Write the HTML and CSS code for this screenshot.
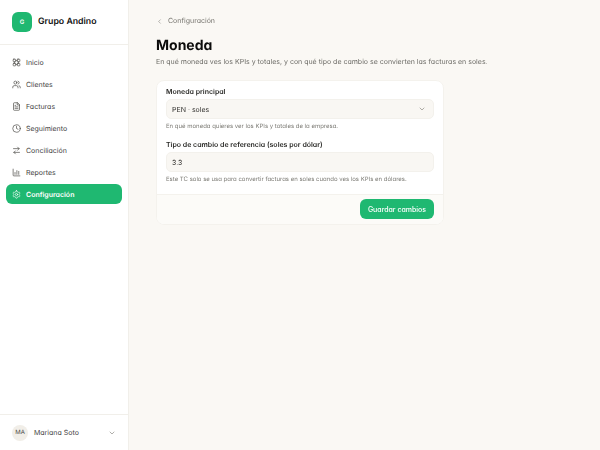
FILE: index.html
```html
<!DOCTYPE html>
<html lang="es">
<head>
<meta charset="utf-8">
<title>Moneda</title>
<link rel="stylesheet" href="styles.css">
</head>
<body>
<div class="app">
  <aside class="sidebar">
    <div class="brand"><span class="logo">G</span><span class="brand-name">Grupo Andino</span></div>
    <nav class="nav">
      <a class="nav-item"><svg viewBox="0 0 24 24"><rect x="3" y="3" width="7" height="7" rx="2"/><rect x="14" y="3" width="7" height="7" rx="2"/><rect x="3" y="14" width="7" height="7" rx="2"/><rect x="14" y="14" width="7" height="7" rx="2"/><path d="M10 7h4M10 17h4M7 10v4M17 10v4"/></svg>Inicio</a>
      <a class="nav-item"><svg viewBox="0 0 24 24"><circle cx="9" cy="7" r="4"/><path d="M2 21v-2a4 4 0 0 1 4-4h6a4 4 0 0 1 4 4v2"/><path d="M16 3.1a4 4 0 0 1 0 7.8M22 21v-2a4 4 0 0 0-3-3.9"/></svg>Clientes</a>
      <a class="nav-item"><svg viewBox="0 0 24 24"><path d="M14 2H6a2 2 0 0 0-2 2v16a2 2 0 0 0 2 2h12a2 2 0 0 0 2-2V8z"/><path d="M14 2v6h6M8 13h8M8 17h8M8 9h2"/></svg>Facturas</a>
      <a class="nav-item"><svg viewBox="0 0 24 24"><circle cx="12" cy="12" r="10"/><path d="M12 6v6l4 2"/></svg>Seguimiento</a>
      <a class="nav-item"><svg viewBox="0 0 24 24"><path d="M4 7h15M15 3l4 4-4 4"/><path d="M20 17H5M9 13l-4 4 4 4"/></svg>Conciliación</a>
      <a class="nav-item"><svg viewBox="0 0 24 24"><path d="M3 3v16a2 2 0 0 0 2 2h16"/><path d="M8 17v-5M13 17V7M18 17v-8"/></svg>Reportes</a>
      <a class="nav-item active"><svg viewBox="0 0 24 24"><path d="M12.22 2h-.44a2 2 0 0 0-2 2v.18a2 2 0 0 1-1 1.73l-.43.25a2 2 0 0 1-2 0l-.15-.08a2 2 0 0 0-2.73.73l-.22.38a2 2 0 0 0 .73 2.73l.15.1a2 2 0 0 1 1 1.72v.51a2 2 0 0 1-1 1.74l-.15.09a2 2 0 0 0-.73 2.73l.22.38a2 2 0 0 0 2.73.73l.15-.08a2 2 0 0 1 2 0l.43.25a2 2 0 0 1 1 1.73V20a2 2 0 0 0 2 2h.44a2 2 0 0 0 2-2v-.18a2 2 0 0 1 1-1.73l.43-.25a2 2 0 0 1 2 0l.15.08a2 2 0 0 0 2.73-.73l.22-.39a2 2 0 0 0-.73-2.73l-.15-.08a2 2 0 0 1-1-1.74v-.5a2 2 0 0 1 1-1.74l.15-.09a2 2 0 0 0 .73-2.73l-.22-.38a2 2 0 0 0-2.73-.73l-.15.08a2 2 0 0 1-2 0l-.43-.25a2 2 0 0 1-1-1.73V4a2 2 0 0 0-2-2z"/><circle cx="12" cy="12" r="3"/></svg>Configuración</a>
    </nav>
    <div class="user">
      <span class="avatar">MA</span>
      <span class="user-name">Mariana Soto</span>
      <svg class="chev" viewBox="0 0 24 24"><path d="M6 9l6 6 6-6"/></svg>
    </div>
  </aside>
  <main class="main">
    <a class="back"><svg viewBox="0 0 24 24"><path d="M15 18l-6-6 6-6"/></svg>Configuración</a>
    <h1 class="title">Moneda</h1>
    <p class="subtitle">En qué moneda ves los KPIs y totales, y con qué tipo de cambio se convierten las facturas en soles.</p>
    <section class="card">
      <div class="card-body">
        <div class="field">
          <label class="label">Moneda principal</label>
          <div class="control"><span>PEN · soles</span><svg class="chev" viewBox="0 0 24 24"><path d="M6 9l6 6 6-6"/></svg></div>
          <p class="hint">En qué moneda quieres ver los KPIs y totales de la empresa.</p>
        </div>
        <div class="field">
          <label class="label">Tipo de cambio de referencia (soles por dólar)</label>
          <div class="control"><span>3.3</span></div>
          <p class="hint">Este TC solo se usa para convertir facturas en soles cuando ves los KPIs en dólares.</p>
        </div>
      </div>
      <div class="card-foot"><button class="save">Guardar cambios</button></div>
    </section>
  </main>
</div>
</body>
</html>
```
FILE: styles.css
```css
* { box-sizing: border-box; }
html, body { margin: 0; height: 100%; }
body {
  font-family: Inter, "Liberation Sans", sans-serif;
  font-feature-settings: "cv11" 1;
  text-rendering: geometricPrecision;
  color: #1a1a18;
  background: #faf8f4;
}
svg { fill: none; stroke: currentColor; stroke-width: 1.75; stroke-linecap: round; stroke-linejoin: round; flex: none; }
.app { display: flex; height: 450px; width: 600px; overflow: hidden; filter: blur(0.3px); }
.sidebar { width: 129px; flex: none; background: #fff; border-right: 1px solid #f1efea; display: flex; flex-direction: column; }
.brand { height: 45px; border-bottom: 1px solid #f1efea; display: flex; align-items: center; gap: 6px; padding: 0 12px; }
.logo { width: 20px; height: 20px; border-radius: 6px; background: #1fb871; color: #fff; font-size: 6px; font-weight: 600; display: flex; align-items: center; justify-content: center; }
.brand-name { font-size: 8.75px; font-weight: 600; color: #111; }
.nav { flex: 1; display: flex; flex-direction: column; gap: 2px; padding: 7px 6px; }
.nav-item { height: 20px; display: flex; align-items: center; gap: 5px; padding: 0 6px; border-radius: 6px; font-size: 7px; font-weight: 400; color: #44433f; }
.nav-item svg { width: 9px; height: 9px; }
.nav-item.active { background: #1fb871; color: #fff; font-weight: 600; }
.user { height: 36px; border-top: 1px solid #f1efea; display: flex; align-items: center; padding: 0 12px; gap: 6px; }
.avatar { width: 16px; height: 16px; border-radius: 50%; background: #f1eee8; color: #44433f; font-size: 6px; font-weight: 400; display: flex; align-items: center; justify-content: center; }
.user-name { flex: 1; font-size: 7px; font-weight: 400; color: #44433f; }
.chev { width: 8px; height: 8px; color: #77756f; }
.main { flex: 1; padding: 16px 27px; }
.back { display: flex; align-items: center; gap: 5px; font-size: 7px; line-height: 10px; color: #77756f; }
.back svg { width: 7px; height: 7px; }
.title { margin: 10px 0 0; font-size: 14px; line-height: 20px; font-weight: 700; color: #0c0c0b; }
.subtitle { margin: 0; font-size: 7px; line-height: 11px; color: #6e6d68; }
.card { margin-top: 13px; width: 288px; background: #fff; border: 1px solid #f4f2ed; border-radius: 8px; overflow: hidden; }
.card-body { padding: 5px 9px 10px; display: flex; flex-direction: column; gap: 8px; }
.label { display: block; font-size: 7px; line-height: 11px; font-weight: 600; color: #2a2a27; }
.control { margin-top: 2px; height: 20px; background: #f9f7f3; border: 1px solid #f3f1ec; border-radius: 5px; display: flex; align-items: center; justify-content: space-between; padding: 0 7px 0 5px; font-size: 7px; font-weight: 400; color: #33322f; }
.hint { margin: 3px 0 0; font-size: 6px; line-height: 9px; color: #7d7c76; }
.card-foot { border-top: 1px solid #f4f2ed; padding: 4px 9px 5px; display: flex; justify-content: flex-end; background: #fcfbf8; }
.save { width: 74px; height: 20px; border: 0; padding: 0; border-radius: 6px; background: #1fb871; color: #fff; font: inherit; font-size: 7px; font-weight: 500; font-feature-settings: inherit; }
```
